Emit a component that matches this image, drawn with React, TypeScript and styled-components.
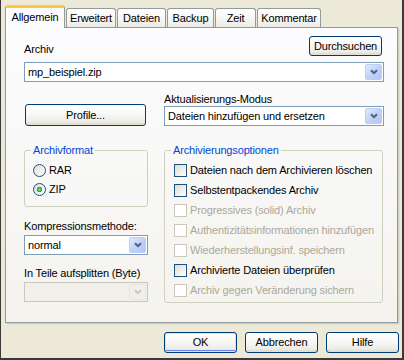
import styled, { createGlobalStyle } from "styled-components";

const GlobalStyle = createGlobalStyle`
  html, body {
    margin: 0;
    padding: 0;
    background: #ece9d8;
  }
  body {
    font-family: "Liberation Sans", Arial, sans-serif;
    font-size: 11px;
    letter-spacing: -0.15px;
    color: #000;
  }
`;

const tabs = [
  { label: "Allgemein", width: 60, active: true },
  { label: "Erweitert", width: 50 },
  { label: "Dateien", width: 49 },
  { label: "Backup", width: 47 },
  { label: "Zeit", width: 41 },
  { label: "Kommentar", width: 64 },
];

const options = [
  { label: "Dateien nach dem Archivieren löschen" },
  { label: "Selbstentpackendes Archiv" },
  { label: "Progressives (solid) Archiv", disabled: true },
  { label: "Authentizitätsinformationen hinzufügen", disabled: true },
  { label: "Wiederherstellungsinf. speichern", disabled: true },
  { label: "Archivierte Dateien überprüfen" },
  { label: "Archiv gegen Veränderung sichern", disabled: true },
];

const Chevron = ({ color }: { color: string }) => (
  <svg width="8" height="6" viewBox="0 0 8 6">
    <path d="M1 1.2 L4 4.2 L7 1.2" stroke={color} strokeWidth="2" fill="none" />
  </svg>
);

const Combo = ({ value, disabled }: { value?: string; disabled?: boolean }) => (
  <ComboBox $disabled={disabled}>
    <ComboText>{value}</ComboText>
    <ComboButton $disabled={disabled}>
      <Chevron color={disabled ? "#c9c7ba" : "#4d6185"} />
    </ComboButton>
  </ComboBox>
);

export default function App() {
  return (
    <>
      <GlobalStyle />
      <Window>
        <TabStrip>
          {tabs.map(t => (
            <Tab key={t.label} $w={t.width} $active={t.active}>
              {t.label}
            </Tab>
          ))}
        </TabStrip>

        <Panel>
          <TopRow>
            <Label>Archiv</Label>
            <PushButton $w={73} $h={20}>Durchsuchen</PushButton>
          </TopRow>
          <ComboSlot $top={6}>
            <Combo value="mp_beispiel.zip" />
          </ComboSlot>

          <Columns $top={11}>
            <ProfileButton $w={121} $h={22}>Profile...</ProfileButton>
            <Column>
              <Label>Aktualisierungs-Modus</Label>
              <Combo value="Dateien hinzufügen und ersetzen" />
            </Column>
          </Columns>

          <Columns $top={18}>
            <Column>
              <Group $h={63}>
                <Legend>Archivformat</Legend>
                <RadioList>
                  <Choice $h={19}>
                    <Radio />
                    RAR
                  </Choice>
                  <Choice $h={19}>
                    <Radio $checked />
                    ZIP
                  </Choice>
                </RadioList>
              </Group>
              <Label $top={13}>Kompressionsmethode:</Label>
              <ComboSlot $top={2}>
                <Combo value="normal" />
              </ComboSlot>
              <Label $top={12}>In Teile aufsplitten (Byte)</Label>
              <ComboSlot $top={2}>
                <Combo disabled />
              </ComboSlot>
            </Column>

            <Group $h={159} $w={219}>
              <Legend>Archivierungsoptionen</Legend>
              <CheckList>
                {options.map(o => (
                  <Choice key={o.label} $h={20} $disabled={o.disabled}>
                    <Check $disabled={o.disabled} />
                    {o.label}
                  </Choice>
                ))}
              </CheckList>
            </Group>
          </Columns>
        </Panel>

        <Footer>
          <PushButton $w={73} $h={21} $default>OK</PushButton>
          <PushButton $w={73} $h={21}>Abbrechen</PushButton>
          <PushButton $w={73} $h={21}>Hilfe</PushButton>
        </Footer>
      </Window>
    </>
  );
}

const Window = styled.div`
  width: 404px;
  height: 360px;
  box-sizing: border-box;
  background: #ece9d8;
  display: flex;
  flex-direction: column;
  box-shadow: inset 1px 0 0 #3a3a3a, inset -2px 0 0 #3a3a3a,
    inset 0 -2px 0 #3a3a3a;
`;

const TabStrip = styled.div`
  display: flex;
  align-items: flex-end;
  gap: 1px;
  height: 27px;
  padding-left: 5px;
  position: relative;
  z-index: 1;
`;

const Tab = styled.div<{ $w: number; $active?: boolean }>`
  box-sizing: border-box;
  width: ${p => p.$w}px;
  height: ${p => (p.$active ? 23 : 19)}px;
  margin-bottom: ${p => (p.$active ? -1 : 0)}px;
  padding-bottom: ${p => (p.$active ? 2 : 0)}px;
  display: flex;
  align-items: center;
  justify-content: center;
  line-height: 13px;
  white-space: nowrap;
  border: 1px solid #919b9c;
  border-bottom: none;
  border-radius: 3px 3px 0 0;
  background: ${p =>
    p.$active
      ? "#fcfcfe"
      : "linear-gradient(#ffffff 0%, #f7f7f4 50%, #ecebe6 100%)"};
  border-top: ${p => (p.$active ? "3px solid #ffc83c" : "1px solid #919b9c")};
`;

const Panel = styled.div`
  box-sizing: border-box;
  width: 393px;
  height: 296px;
  margin-left: 5px;
  padding: 8px 13px 0 18px;
  border: 1px solid #919b9c;
  background: linear-gradient(#fcfcfe, #f4f3ee);
  box-shadow: 1px 1px 0 #d0cdbf, 2px 2px 0 #e3e0d0;
  display: flex;
  flex-direction: column;
`;

const TopRow = styled.div`
  display: flex;
  justify-content: space-between;
  align-items: flex-end;
  padding-right: 2px;
`;

const Label = styled.div<{ $top?: number }>`
  line-height: 13px;
  margin-top: ${p => p.$top || 0}px;
  white-space: nowrap;
`;

const ComboSlot = styled.div<{ $top: number }>`
  margin-top: ${p => p.$top}px;
`;

const ComboBox = styled.div<{ $disabled?: boolean }>`
  box-sizing: border-box;
  height: 20px;
  display: flex;
  align-items: center;
  padding: 1px;
  border: 1px solid ${p => (p.$disabled ? "#c9c7ba" : "#7f9db9")};
  background: ${p => (p.$disabled ? "#f1f0ea" : "#fff")};
`;

const ComboText = styled.span`
  flex: 1;
  padding-left: 2px;
  line-height: 13px;
  white-space: nowrap;
`;

const ComboButton = styled.span<{ $disabled?: boolean }>`
  box-sizing: border-box;
  width: 17px;
  height: 16px;
  display: flex;
  align-items: center;
  justify-content: center;
  border: 1px solid ${p => (p.$disabled ? "#e8e6dc" : "#bccdf7")};
  border-radius: 2px;
  background: ${p =>
    p.$disabled
      ? "#f0efe9"
      : "linear-gradient(135deg, #e1eafe 0%, #c4d4f8 45%, #b2c6f4 100%)"};
`;

const Columns = styled.div<{ $top: number }>`
  display: grid;
  grid-template-columns: 124px 220px;
  column-gap: 16px;
  align-items: end;
  margin-top: ${p => p.$top}px;

  &:last-child {
    align-items: start;
  }
`;

const Column = styled.div`
  display: flex;
  flex-direction: column;
`;

const PushButton = styled.button<{ $w: number; $h: number; $default?: boolean }>`
  box-sizing: border-box;
  width: ${p => p.$w}px;
  height: ${p => p.$h}px;
  margin: 0;
  padding: 0;
  font: inherit;
  letter-spacing: inherit;
  line-height: 13px;
  color: #000;
  border: 1px solid #003c74;
  border-radius: 3px;
  background: linear-gradient(
    #ffffff 0%,
    #f8f8f5 45%,
    #ecebe6 85%,
    #d6d0c5 100%
  );
  box-shadow: ${p =>
    p.$default
      ? "inset 0 0 0 1px #cee7ff, inset 0 -1px 0 1px #6982ee"
      : "inset 0 -1px 0 #e3e0d0"};
`;

const ProfileButton = styled(PushButton)`
  margin-left: 1px;
`;

const Group = styled.fieldset<{ $h: number; $w?: number }>`
  box-sizing: border-box;
  margin: 0;
  min-width: 0;
  width: ${p => (p.$w ? `${p.$w}px` : "100%")};
  height: ${p => p.$h}px;
  padding: 0 8px;
  border: 1px solid #d0d0bf;
  border-radius: 3px;
`;

const Legend = styled.legend`
  padding: 0 2px;
  margin-left: -2px;
  line-height: 13px;
  color: #0046d5;
`;

const RadioList = styled.div`
  padding-top: 4px;
`;

const CheckList = styled.div`
  padding-top: 3px;
  margin-left: 1px;
`;

const Choice = styled.div<{ $h: number; $disabled?: boolean }>`
  display: flex;
  align-items: center;
  gap: 3px;
  height: ${p => p.$h}px;
  line-height: 13px;
  white-space: nowrap;
  color: ${p => (p.$disabled ? "#aca899" : "#000")};
`;

const Radio = styled.span<{ $checked?: boolean }>`
  box-sizing: border-box;
  width: 13px;
  height: 13px;
  flex: none;
  border-radius: 50%;
  border: 1px solid #1c5180;
  background: ${p =>
    p.$checked
      ? "radial-gradient(circle at 50% 50%, #8fe08f 0px, #21a121 2.5px, transparent 3px), linear-gradient(135deg, #dcdcd7, #ffffff)"
      : "linear-gradient(135deg, #dcdcd7, #ffffff)"};
`;

const Check = styled.span<{ $disabled?: boolean }>`
  box-sizing: border-box;
  width: 13px;
  height: 13px;
  flex: none;
  border: 1px solid ${p => (p.$disabled ? "#cac8bb" : "#1c5180")};
  background: ${p =>
    p.$disabled ? "#fff" : "linear-gradient(135deg, #dcdcd7, #ffffff)"};
`;

const Footer = styled.div`
  display: flex;
  justify-content: flex-end;
  gap: 8px;
  padding: 9px 5px 0 0;
`;
